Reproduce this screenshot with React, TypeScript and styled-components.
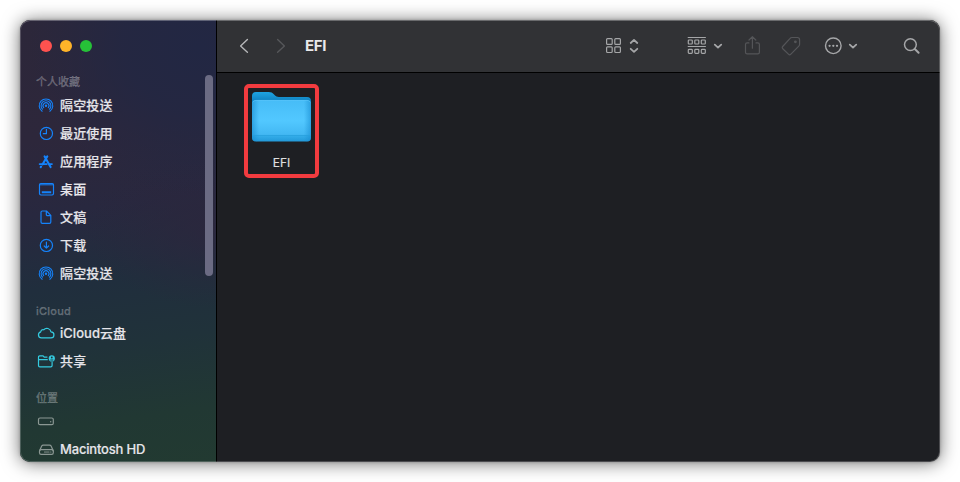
import React from "react";
import styled, { createGlobalStyle } from "styled-components";

const Global = createGlobalStyle`
  * { box-sizing: border-box; }
  body { margin: 0; background: #fff; overflow: hidden; font-family: Inter, "Noto Sans CJK SC", sans-serif; }
  svg { display: block; fill: none; stroke-linecap: round; stroke-linejoin: round; }
`;

const Desktop = styled.main`
  width: 960px;
  height: 482px;
  padding: 20px;
  background: #fff;
`;

const Window = styled.div`
  position: relative;
  display: flex;
  width: 920px;
  height: 442px;
  border-radius: 10px;
  overflow: hidden;
  background: #1e1f23;
`;

const Shadow = styled.div`
  width: 920px;
  height: 442px;
  border-radius: 10px;
  box-shadow: 0 1px 18px rgba(0, 0, 0, 0.56), 0 0 3px rgba(0, 0, 0, 0.25);
`;

const Rim = styled.div`
  position: absolute;
  inset: 0;
  border: 1px solid rgba(255, 255, 255, 0.2);
  border-top-color: rgba(255, 255, 255, 0.28);
  border-radius: 10px;
  pointer-events: none;
`;

const Sidebar = styled.aside`
  position: relative;
  width: 197px;
  flex: none;
  border-right: 1px solid #000;
  background:
    radial-gradient(ellipse 170px 150px at 92% 6%, #222743 0%, rgba(34, 39, 67, 0.8) 45%, rgba(34, 39, 67, 0) 100%),
    radial-gradient(ellipse 130px 80px at 100% 47%, rgba(44, 38, 61, 0.8) 0%, rgba(44, 38, 61, 0) 100%),
    linear-gradient(172deg, #2c273a 0%, #2d273b 26%, #28283f 42%, #202e3d 58%, #20323a 72%, #213833 88%, #223a31 100%);
`;

const Lights = styled.div`
  display: flex;
  gap: 8px;
  height: 53px;
  padding: 20px 0 0 20px;
`;

const Light = styled.span<{ $color: string }>`
  width: 12px;
  height: 12px;
  border-radius: 50%;
  background: ${(p) => p.$color};
`;

const Section = styled.section`
  margin-bottom: 14px;
`;

const Heading = styled.h2<{ $drop?: number }>`
  height: 18px;
  margin: 0;
  padding: ${(p) => p.$drop ?? 0}px 0 0 16px;
  font-size: 11px;
  font-weight: 500;
  line-height: 18px;
  letter-spacing: ${(p) => (p.$drop ? 0.25 : 0)}px;
  -webkit-text-stroke: 0.25px currentColor;
  color: rgba(255, 255, 255, 0.27);
  white-space: nowrap;
`;

const Item = styled.div`
  display: flex;
  align-items: center;
  gap: 3px;
  height: 28px;
  padding-left: 15px;
  font-size: 13px;
  font-weight: 500;
  line-height: 28px;
  color: #e6e5ea;
  white-space: nowrap;
`;

const ItemText = styled.span<{ $spacing?: number }>`
  letter-spacing: ${(p) => p.$spacing ?? 0.15}px;
  -webkit-text-stroke: 0.15px currentColor;
`;

const ScrollThumb = styled.div`
  position: absolute;
  top: 55px;
  right: 3px;
  width: 8px;
  height: 201px;
  border-radius: 4px;
  background: #6b6b83;
`;

const Main = styled.div`
  display: flex;
  flex: 1;
  flex-direction: column;
`;

const Toolbar = styled.header`
  display: flex;
  align-items: center;
  height: 53px;
  padding: 0 19px 1px 17px;
  border-bottom: 1px solid #000;
  background: #313235;
`;

const Title = styled.h1`
  flex: 1;
  margin: 0 0 0 14px;
  font-size: 15px;
  font-weight: 700;
  letter-spacing: -0.3px;
  color: #e9e9ea;
`;

const Tool = styled.span<{ $width: number; $after?: number; $color?: string }>`
  width: ${(p) => p.$width}px;
  margin-right: ${(p) => p.$after ?? 0}px;
  color: ${(p) => p.$color ?? "#a5a6a8"};
`;

const Content = styled.div`
  flex: 1;
  padding: 11px 27px;
`;

const FolderTile = styled.div`
  display: flex;
  flex-direction: column;
  align-items: center;
  width: 75px;
  height: 94px;
  padding-top: 3px;
  border: 4px solid #f23b3f;
  border-radius: 5px;
`;

const FolderName = styled.span`
  margin-top: 12px;
  font-size: 12px;
  line-height: 16px;
  -webkit-text-stroke: 0.2px currentColor;
  color: #dededf;
`;

const BLUE = "#1583fb";
const CYAN = "#34cbe0";
const GRAY = "#8b9793";

type IconName =
  | "airdrop" | "clock" | "apps" | "desktop" | "document"
  | "download" | "cloud" | "shared" | "drive" | "disk";

const glyphs: Record<IconName, React.ReactNode> = {
  airdrop: (
    <>
      <path d="M7.1 16.3a6.8 6.8 0 1 1 7.8 0" />
      <path d="M7.5 14.1a4.9 4.9 0 1 1 7 0" />
      <path d="M8.7 12.7a3 3 0 1 1 4.6 0" />
      <circle cx="11" cy="10.8" r="1.2" fill="currentColor" stroke="none" />
    </>
  ),
  clock: (
    <>
      <circle cx="11.4" cy="10.4" r="6.1" />
      <path d="M11.4 6.3v4.4H8.3" />
    </>
  ),
  apps: (
    <>
      <path d="M9.6 5.4l6 10.7M12.3 5.4L7.6 13.3M5.7 16.1l.4-.6" strokeWidth="2.1" />
      <path d="M4.7 13.1h7M14.6 13.1h2.3" strokeWidth="1.9" />
    </>
  ),
  desktop: (
    <>
      <rect x="4.5" y="4.6" width="14" height="11.4" rx="1.4" />
      <path d="M4.8 5.6h13.4" strokeWidth="1.8" opacity=".6" />
      <path d="M6.8 13.2h9.4" strokeWidth="1.9" strokeLinecap="butt" />
    </>
  ),
  document: (
    <path d="M7.3 4h4.2l4.3 4.4v6.7a1.3 1.3 0 0 1-1.3 1.3H7.3A1.3 1.3 0 0 1 6 15.1V5.3A1.3 1.3 0 0 1 7.3 4zM11.3 4.2v3.2a1.2 1.2 0 0 0 1.2 1.2h3.2" />
  ),
  download: (
    <>
      <circle cx="11.4" cy="10.4" r="6.1" />
      <path d="M11.4 7.1v6M9.2 11l2.2 2.2 2.2-2.2" />
    </>
  ),
  cloud: (
    <path d="M6.4 14.9a3.1 3.1 0 0 1-.6-6.1 2.2 2.2 0 0 1 2.9-2A4.2 4.2 0 0 1 16 8.9a3 3 0 0 1-.1 6z" />
  ),
  shared: (
    <>
      <path d="M12 6.1H9.2L8.1 4.8H4.7A1.2 1.2 0 0 0 3.5 6v8.6a1.3 1.3 0 0 0 1.3 1.3h11a1.3 1.3 0 0 0 1.3-1.3v-3.2M3.7 8.7h8.6" />
      <circle cx="16.8" cy="7.4" r="3.1" fill="currentColor" stroke="none" />
      <circle cx="16.8" cy="6.5" r=".9" fill="#203238" stroke="none" />
      <path d="M15.7 9h2.2" stroke="#203238" strokeWidth=".9" />
    </>
  ),
  drive: (
    <>
      <rect x="3.5" y="7" width="14.8" height="6.7" rx="1.5" />
      <circle cx="15.7" cy="10.8" r=".7" fill="currentColor" stroke="none" />
    </>
  ),
  disk: (
    <>
      <path d="M4.5 12.1l2.2-5a1.8 1.8 0 0 1 1.6-1h6.2a1.8 1.8 0 0 1 1.6 1l2.2 5" />
      <rect x="4.5" y="10.6" width="13.8" height="4.7" rx="1.6" />
      <path d="M9.5 13h4.5M15.7 13h.2" strokeDasharray="1 1" />
    </>
  ),
};

function SideIcon({ name, color }: { name: IconName; color: string }) {
  return (
    <svg width="22" height="20" viewBox="0 0 22 20" color={color} stroke="currentColor" strokeWidth={name === "airdrop" ? 1.1 : 1.2}>
      {glyphs[name]}
    </svg>
  );
}

interface Entry { label: string; icon: IconName; spacing?: number }
interface Group { title: string; color: string; drop?: number; entries: Entry[] }

const groups: Group[] = [
  {
    title: "个人收藏",
    color: BLUE,
    entries: [
      { label: "隔空投送", icon: "airdrop" },
      { label: "最近使用", icon: "clock" },
      { label: "应用程序", icon: "apps" },
      { label: "桌面", icon: "desktop" },
      { label: "文稿", icon: "document" },
      { label: "下载", icon: "download" },
      { label: "隔空投送", icon: "airdrop" },
    ],
  },
  {
    title: "iCloud",
    color: CYAN,
    drop: 1,
    entries: [
      { label: "iCloud云盘", icon: "cloud", spacing: 0.03 },
      { label: "共享", icon: "shared" },
    ],
  },
  {
    title: "位置",
    color: GRAY,
    entries: [
      { label: "", icon: "drive" },
      { label: "Macintosh HD", icon: "disk", spacing: -0.18 },
    ],
  },
];

function FolderIcon() {
  return (
    <svg width="61" height="52" viewBox="0 0 61 52">
      <defs>
        <linearGradient id="back" x1="0" y1="0" x2="0" y2="1">
          <stop offset="0" stopColor="#1ea4e2" />
          <stop offset=".5" stopColor="#0f80bf" />
        </linearGradient>
        <linearGradient id="front" x1="0" y1="0" x2="0" y2="1">
          <stop offset="0" stopColor="#46bcf7" />
          <stop offset=".5" stopColor="#52c8ff" />
          <stop offset=".83" stopColor="#43b8f3" />
          <stop offset=".86" stopColor="#34aeea" />
          <stop offset="1" stopColor="#2399d9" />
        </linearGradient>
        <linearGradient id="edges">
          <stop offset="0" stopColor="#168bd0" stopOpacity=".6" />
          <stop offset=".12" stopColor="#168bd0" stopOpacity="0" />
          <stop offset=".88" stopColor="#168bd0" stopOpacity="0" />
          <stop offset="1" stopColor="#168bd0" stopOpacity=".6" />
        </linearGradient>
      </defs>
      <path d="M1 5a4 4 0 0 1 4-4h12.5c2.7 0 3.8.8 5.3 2.3l1 1c1.2 1.2 2.2 1.7 4 1.7H56a4 4 0 0 1 4 4v10H1z" fill="url(#back)" />
      <path d="M1 13a4 4 0 0 1 4-4h51a4 4 0 0 1 4 4v33.4a4 4 0 0 1-4 4H5a4 4 0 0 1-4-4z" fill="url(#front)" />
      <path d="M1 13a4 4 0 0 1 4-4h51a4 4 0 0 1 4 4v33.4a4 4 0 0 1-4 4H5a4 4 0 0 1-4-4z" fill="url(#edges)" />
      <path d="M2 10.8Q3.2 9.4 5 9.4h51q1.8 0 3 1.4" stroke="#5cc6fa" strokeWidth=".6" />
      <path d="M1.5 44.5h58" stroke="#279fdd" strokeWidth=".7" />
    </svg>
  );
}

function Chevron() {
  return (
    <svg width="10" height="20" viewBox="0 0 10 20" stroke="currentColor" strokeWidth="1.8">
      <path d="M1.8 8.6L5 11.6l3.2-3" />
    </svg>
  );
}

export default function App() {
  return (
    <>
      <Global />
      <Desktop>
        <Shadow>
          <Window>
            <Sidebar>
              <Lights>
                <Light $color="#ff524f" />
                <Light $color="#ffb429" />
                <Light $color="#26c138" />
              </Lights>
              {groups.map((group) => (
                <Section key={group.title}>
                  <Heading $drop={group.drop}>{group.title}</Heading>
                  {group.entries.map((entry, i) => (
                    <Item key={i}>
                      <SideIcon name={entry.icon} color={group.color} />
                      <ItemText $spacing={entry.spacing}>{entry.label}</ItemText>
                    </Item>
                  ))}
                </Section>
              ))}
              <ScrollThumb />
            </Sidebar>
            <Main>
              <Toolbar>
                <Tool $width={20} $after={17} $color="#b5b6b8">
                  <svg width="20" height="20" viewBox="0 0 20 20" stroke="currentColor" strokeWidth="1.4">
                    <path d="M13.4 3.6L6.6 10l6.8 6.2" />
                  </svg>
                </Tool>
                <Tool $width={20} $color="#56575a">
                  <svg width="20" height="20" viewBox="0 0 20 20" stroke="currentColor" strokeWidth="1.4">
                    <path d="M6.6 3.6L13.4 10l-6.8 6.2" />
                  </svg>
                </Tool>
                <Title>EFI</Title>
                <Tool $width={18} $after={6}>
                  <svg width="18" height="20" viewBox="0 0 18 20" stroke="currentColor" strokeWidth="1.2">
                    <rect x="1.6" y="2.7" width="5.6" height="5.6" rx=".9" />
                    <rect x="9.8" y="2.7" width="5.6" height="5.6" rx=".9" />
                    <rect x="1.6" y="10.9" width="5.6" height="5.6" rx=".9" />
                    <rect x="9.8" y="10.9" width="5.6" height="5.6" rx=".9" />
                  </svg>
                </Tool>
                <Tool $width={10} $after={48}>
                  <svg width="10" height="20" viewBox="0 0 10 20" stroke="currentColor" strokeWidth="1.8">
                    <path d="M1.7 7L5 3.9l3.3 3.1M1.7 12.8L5 15.9l3.3-3.1" />
                  </svg>
                </Tool>
                <Tool $width={20} $after={6}>
                  <svg width="20" height="20" viewBox="0 0 20 20" stroke="currentColor" strokeWidth="1.2">
                    <path d="M1.2 1.5h17.2M1.2 10.5h17.2" />
                    <rect x="1.3" y="4" width="4" height="4" rx=".8" />
                    <rect x="7.8" y="4" width="4" height="4" rx=".8" />
                    <rect x="14.3" y="4" width="4" height="4" rx=".8" />
                    <rect x="1.3" y="13.3" width="4" height="4" rx=".8" />
                    <rect x="7.8" y="13.3" width="4" height="4" rx=".8" />
                    <rect x="14.3" y="13.3" width="4" height="4" rx=".8" />
                  </svg>
                </Tool>
                <Tool $width={10} $after={19}><Chevron /></Tool>
                <Tool $width={20} $after={19} $color="#545558">
                  <svg width="20" height="20" viewBox="0 0 20 20" stroke="currentColor" strokeWidth="1.2">
                    <path d="M6.9 6.9H5.1a1.6 1.6 0 0 0-1.6 1.6v7.8a1.6 1.6 0 0 0 1.6 1.6h10.7a1.6 1.6 0 0 0 1.6-1.6V8.5a1.6 1.6 0 0 0-1.6-1.6H14M10.4 12.2V.7M7 4L10.4.7 13.8 4" />
                  </svg>
                </Tool>
                <Tool $width={20} $after={22} $color="#545558">
                  <svg width="20" height="20" viewBox="0 0 20 20" stroke="currentColor" strokeWidth="1.2">
                    <path d="M1.7 10.5l7.4-8.2c.5-.6 1-.8 1.8-.8h5.5c1.4 0 2.2.8 2.2 2.2v4.6c0 .8-.2 1.3-.8 1.8l-7.9 8.1c-.8.8-1.7.8-2.5 0l-5.6-5.5c-.7-.7-.7-1.5-.1-2.2z" />
                    <circle cx="14.4" cy="5.8" r=".8" fill="currentColor" />
                  </svg>
                </Tool>
                <Tool $width={20} $after={5}>
                  <svg width="20" height="20" viewBox="0 0 20 20" stroke="currentColor" strokeWidth="1.4">
                    <circle cx="10.3" cy="9.8" r="7.8" />
                    <g fill="currentColor" stroke="none">
                      <circle cx="6.6" cy="9.8" r="1.15" />
                      <circle cx="10.3" cy="9.8" r="1.15" />
                      <circle cx="14" cy="9.8" r="1.15" />
                    </g>
                  </svg>
                </Tool>
                <Tool $width={10} $after={43}><Chevron /></Tool>
                <Tool $width={20}>
                  <svg width="20" height="20" viewBox="0 0 20 20" stroke="currentColor" strokeWidth="1.5">
                    <circle cx="9.4" cy="8.6" r="5.9" />
                    <path d="M13.8 13l3.8 3.8" strokeWidth="2" />
                  </svg>
                </Tool>
              </Toolbar>
              <Content>
                <FolderTile>
                  <FolderIcon />
                  <FolderName>EFI</FolderName>
                </FolderTile>
              </Content>
            </Main>
            <Rim />
          </Window>
        </Shadow>
      </Desktop>
    </>
  );
}
